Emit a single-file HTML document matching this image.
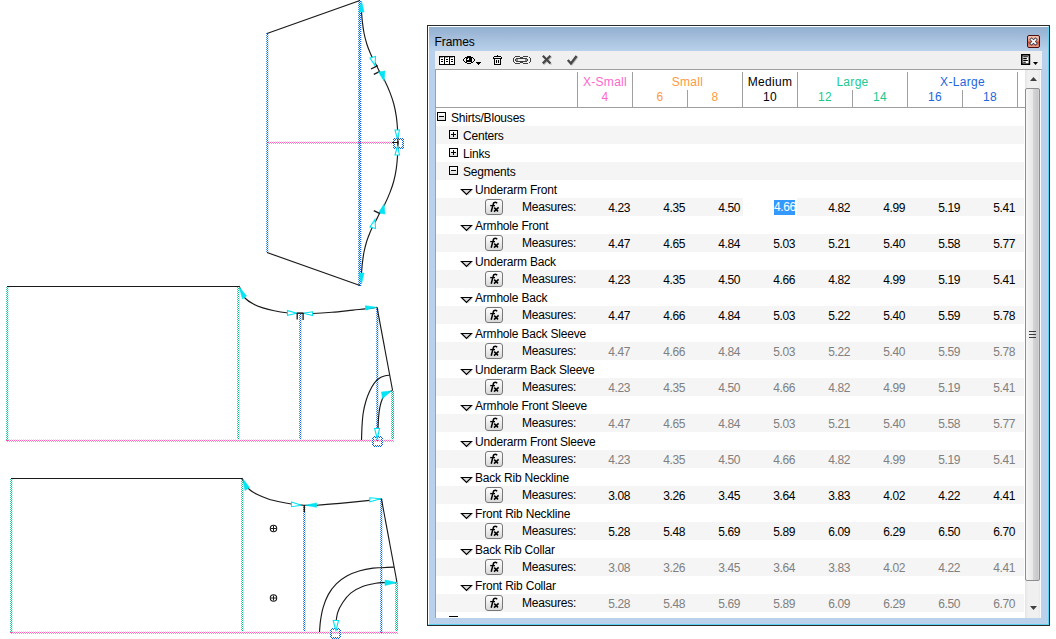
<!DOCTYPE html>
<html><head><meta charset="utf-8">
<style>
html,body{margin:0;padding:0;background:#fff;width:1056px;height:639px;overflow:hidden;position:relative;font-family:"Liberation Sans",sans-serif;font-size:12px;color:#000}
.abs{position:absolute}
#draw{position:absolute;left:0;top:0}
#panel{position:absolute;left:427px;top:25px;width:621px;height:599px;border:1px solid #2a2a2a;background:#b9d1ea}
#panel:before{content:"";position:absolute;left:0;top:0;right:0;bottom:0;border-left:1px solid #fff;border-top:1px solid #fff;border-right:1px solid #5ed0f0;border-bottom:1px solid #5ed0f0}
#title{position:absolute;left:429px;top:27px;width:619px;height:24px;background:linear-gradient(#93afd0,#b9d1ea)}
#ttext{position:absolute;left:434.6px;top:35px;font-size:12px;color:#000;letter-spacing:-0.1px}
#close{position:absolute;left:1027px;top:35px;width:11px;height:11px;border:1px solid #4a1010;border-radius:2px;background:linear-gradient(#f4c8b8,#e89078 45%,#c84a30 55%,#e8a090)}
#toolbar{position:absolute;left:435px;top:51px;width:607px;height:18px;background:#f0f0f0;border-bottom:1px solid #a0a0a0}
#content{position:absolute;left:435px;top:70px;width:590px;height:548px;background:#fff;border-left:1px solid #a0a0a0;overflow:hidden}
#sb{position:absolute;left:1025px;top:70px;width:15px;height:548px;background:linear-gradient(90deg,#e4e4e4,#f0f0f0 3px,#f0f0f0 13px,#e8e8e8);border-right:1px solid #fbfbfb}
#thumb{position:absolute;left:1025px;top:88px;width:13px;height:491px;border:1px solid #8e8e8e;border-radius:2px;background:linear-gradient(90deg,#f6f6f6,#e8e8e8 50%,#d6d6d8 52%,#c8c8cc 90%,#d8d8d8)}
.hl{position:absolute;background:#a0a0a0}
.hdr{position:absolute;text-align:center;width:110px;font-size:12px;letter-spacing:0.3px}
.bg{position:absolute;left:436px;width:588px;height:18px;background:#f5f5f5}
.t{position:absolute;height:18px;line-height:18px;white-space:nowrap;letter-spacing:-0.2px;color:#000}
.v{position:absolute;width:52px;text-align:right;height:18px;line-height:18px;letter-spacing:-0.4px;color:#000}
.v.g{color:#808080}
.sel{position:absolute;width:21px;height:15px;line-height:15px;background:#3399ff;color:#fff;letter-spacing:-0.4px;text-align:center}
.exp{position:absolute;width:7px;height:7px;border:1px solid #000;background:linear-gradient(#fff,#ddd)}
.exp i{position:absolute;background:#000}
.exp i.h{left:1px;top:3px;width:5px;height:1px}
.exp i.v{left:3px;top:1px;width:1px;height:5px}
.tri{position:absolute}
.fx{position:absolute;width:16px;height:14px;border:1px solid #777;border-radius:3px;background:linear-gradient(#fdfdfd,#f0f0f0 40%,#d8d8d8);font-family:"Liberation Serif",serif;font-style:italic;font-size:12px;line-height:14px}
.fx span{position:absolute;left:3px;top:0px;font-size:13px}
.fx b{position:absolute;left:8px;top:1px;font-weight:normal;font-size:11px}
</style></head><body>
<svg id="draw" width="427" height="639" viewBox="0 0 427 639">
<defs><pattern id="bvA" width="1" height="2" patternUnits="userSpaceOnUse"><rect width="1" height="1" fill="#0a64dc"/></pattern><pattern id="bvB" width="1" height="2" patternUnits="userSpaceOnUse"><rect y="1" width="1" height="1" fill="#4a8ee6"/></pattern><pattern id="bvS" width="1" height="2" patternUnits="userSpaceOnUse"><rect y="1" width="1" height="1" fill="#0a64dc"/></pattern><pattern id="bhA" width="2" height="1" patternUnits="userSpaceOnUse"><rect width="1" height="1" fill="#0a64dc"/></pattern><pattern id="bhB" width="2" height="1" patternUnits="userSpaceOnUse"><rect x="1" width="1" height="1" fill="#4a8ee6"/></pattern><pattern id="bhF" width="2" height="1" patternUnits="userSpaceOnUse"><rect x="1" width="1" height="1" fill="#b4d2f4"/></pattern><pattern id="bvF" width="1" height="2" patternUnits="userSpaceOnUse"><rect y="1" width="1" height="1" fill="#b4d2f4"/></pattern><pattern id="gvA" width="1" height="2" patternUnits="userSpaceOnUse"><rect width="1" height="1" fill="#00c48c"/></pattern><pattern id="gvB" width="1" height="2" patternUnits="userSpaceOnUse"><rect y="1" width="1" height="1" fill="#3ccfa4"/></pattern><pattern id="gvS" width="1" height="2" patternUnits="userSpaceOnUse"><rect y="1" width="1" height="1" fill="#00c48c"/></pattern><pattern id="ghA" width="2" height="1" patternUnits="userSpaceOnUse"><rect width="1" height="1" fill="#00c48c"/></pattern><pattern id="ghB" width="2" height="1" patternUnits="userSpaceOnUse"><rect x="1" width="1" height="1" fill="#3ccfa4"/></pattern><pattern id="ghF" width="2" height="1" patternUnits="userSpaceOnUse"><rect x="1" width="1" height="1" fill="#b0ecd8"/></pattern><pattern id="gvF" width="1" height="2" patternUnits="userSpaceOnUse"><rect y="1" width="1" height="1" fill="#b0ecd8"/></pattern><pattern id="pvA" width="1" height="2" patternUnits="userSpaceOnUse"><rect width="1" height="1" fill="#ff5cbc"/></pattern><pattern id="pvB" width="1" height="2" patternUnits="userSpaceOnUse"><rect y="1" width="1" height="1" fill="#ff90cc"/></pattern><pattern id="pvS" width="1" height="2" patternUnits="userSpaceOnUse"><rect y="1" width="1" height="1" fill="#ff5cbc"/></pattern><pattern id="phA" width="2" height="1" patternUnits="userSpaceOnUse"><rect width="1" height="1" fill="#ff5cbc"/></pattern><pattern id="phB" width="2" height="1" patternUnits="userSpaceOnUse"><rect x="1" width="1" height="1" fill="#ff90cc"/></pattern><pattern id="phF" width="2" height="1" patternUnits="userSpaceOnUse"><rect x="1" width="1" height="1" fill="#ffd4ec"/></pattern><pattern id="pvF" width="1" height="2" patternUnits="userSpaceOnUse"><rect y="1" width="1" height="1" fill="#ffd4ec"/></pattern></defs>
<g shape-rendering="crispEdges">
<rect x="267" y="33" width="1" height="220" fill="url(#bvA)"/>
<rect x="266" y="33" width="1" height="220" fill="url(#bvB)"/>
<rect x="268" y="33" width="1" height="220" fill="url(#bvF)"/>
<rect x="359" y="0" width="1" height="286" fill="url(#bvA)"/>
<rect x="360" y="0" width="1" height="286" fill="url(#bvS)"/>
<rect x="358" y="0" width="1" height="286" fill="url(#bvB)"/>
<rect x="361" y="0" width="1" height="286" fill="url(#bvF)"/>
<rect x="268" y="142" width="125" height="1" fill="url(#phA)"/>
<rect x="268" y="141" width="125" height="1" fill="url(#phF)"/>
<rect x="268" y="143" width="125" height="1" fill="url(#phB)"/>
<rect x="7" y="286" width="1" height="155" fill="url(#gvA)"/>
<rect x="6" y="286" width="1" height="155" fill="url(#gvB)"/>
<rect x="8" y="286" width="1" height="155" fill="url(#gvF)"/>
<rect x="238" y="287" width="1" height="154" fill="url(#gvA)"/>
<rect x="237" y="287" width="1" height="154" fill="url(#gvB)"/>
<rect x="239" y="287" width="1" height="154" fill="url(#gvF)"/>
<rect x="300" y="314" width="1" height="127" fill="url(#bvA)"/>
<rect x="299" y="314" width="1" height="127" fill="url(#bvB)"/>
<rect x="301" y="314" width="1" height="127" fill="url(#bvF)"/>
<rect x="377" y="308" width="1" height="133" fill="url(#bvA)"/>
<rect x="376" y="308" width="1" height="133" fill="url(#bvB)"/>
<rect x="378" y="308" width="1" height="133" fill="url(#bvF)"/>
<rect x="392" y="391" width="1" height="50" fill="url(#gvA)"/>
<rect x="393" y="391" width="1" height="50" fill="url(#gvS)"/>
<rect x="391" y="391" width="1" height="50" fill="url(#gvB)"/>
<rect x="6" y="440" width="388" height="1" fill="url(#phA)"/>
<rect x="6" y="439" width="388" height="1" fill="url(#phF)"/>
<rect x="6" y="441" width="388" height="1" fill="url(#phB)"/>
<rect x="11" y="478" width="1" height="155" fill="url(#gvA)"/>
<rect x="10" y="478" width="1" height="155" fill="url(#gvB)"/>
<rect x="12" y="478" width="1" height="155" fill="url(#gvF)"/>
<rect x="242" y="479" width="1" height="154" fill="url(#gvA)"/>
<rect x="241" y="479" width="1" height="154" fill="url(#gvB)"/>
<rect x="243" y="479" width="1" height="154" fill="url(#gvF)"/>
<rect x="304" y="506" width="1" height="127" fill="url(#bvA)"/>
<rect x="303" y="506" width="1" height="127" fill="url(#bvB)"/>
<rect x="305" y="506" width="1" height="127" fill="url(#bvF)"/>
<rect x="381" y="499" width="1" height="134" fill="url(#bvA)"/>
<rect x="380" y="499" width="1" height="134" fill="url(#bvB)"/>
<rect x="382" y="499" width="1" height="134" fill="url(#bvF)"/>
<rect x="396" y="583" width="1" height="50" fill="url(#gvA)"/>
<rect x="397" y="583" width="1" height="50" fill="url(#gvS)"/>
<rect x="395" y="583" width="1" height="50" fill="url(#gvB)"/>
<rect x="10" y="632" width="388" height="1" fill="url(#phA)"/>
<rect x="10" y="631" width="388" height="1" fill="url(#phF)"/>
<rect x="10" y="633" width="388" height="1" fill="url(#phB)"/>
<rect x="394" y="138" width="1" height="1" fill="#0a64dc"/>
<rect x="396" y="138" width="1" height="1" fill="#0a64dc"/>
<rect x="398" y="138" width="1" height="1" fill="#0a64dc"/>
<rect x="400" y="138" width="1" height="1" fill="#0a64dc"/>
<rect x="402" y="138" width="1" height="1" fill="#0a64dc"/>
<rect x="393" y="139" width="1" height="1" fill="#0a64dc"/>
<rect x="395" y="139" width="1" height="1" fill="#0a64dc"/>
<rect x="397" y="139" width="1" height="1" fill="#0a64dc"/>
<rect x="399" y="139" width="1" height="1" fill="#0a64dc"/>
<rect x="401" y="139" width="1" height="1" fill="#0a64dc"/>
<rect x="403" y="139" width="1" height="1" fill="#0a64dc"/>
<rect x="394" y="140" width="1" height="1" fill="#0a64dc"/>
<rect x="402" y="140" width="1" height="1" fill="#0a64dc"/>
<rect x="393" y="141" width="1" height="1" fill="#0a64dc"/>
<rect x="403" y="141" width="1" height="1" fill="#0a64dc"/>
<rect x="394" y="142" width="1" height="1" fill="#0a64dc"/>
<rect x="402" y="142" width="1" height="1" fill="#0a64dc"/>
<rect x="393" y="143" width="1" height="1" fill="#0a64dc"/>
<rect x="403" y="143" width="1" height="1" fill="#0a64dc"/>
<rect x="394" y="144" width="1" height="1" fill="#0a64dc"/>
<rect x="402" y="144" width="1" height="1" fill="#0a64dc"/>
<rect x="393" y="145" width="1" height="1" fill="#0a64dc"/>
<rect x="403" y="145" width="1" height="1" fill="#0a64dc"/>
<rect x="394" y="146" width="1" height="1" fill="#0a64dc"/>
<rect x="402" y="146" width="1" height="1" fill="#0a64dc"/>
<rect x="393" y="147" width="1" height="1" fill="#0a64dc"/>
<rect x="395" y="147" width="1" height="1" fill="#0a64dc"/>
<rect x="397" y="147" width="1" height="1" fill="#0a64dc"/>
<rect x="399" y="147" width="1" height="1" fill="#0a64dc"/>
<rect x="401" y="147" width="1" height="1" fill="#0a64dc"/>
<rect x="403" y="147" width="1" height="1" fill="#0a64dc"/>
<rect x="394" y="148" width="1" height="1" fill="#0a64dc"/>
<rect x="396" y="148" width="1" height="1" fill="#0a64dc"/>
<rect x="398" y="148" width="1" height="1" fill="#0a64dc"/>
<rect x="400" y="148" width="1" height="1" fill="#0a64dc"/>
<rect x="402" y="148" width="1" height="1" fill="#0a64dc"/>
<rect x="374" y="436" width="1" height="1" fill="#0a64dc"/>
<rect x="376" y="436" width="1" height="1" fill="#0a64dc"/>
<rect x="378" y="436" width="1" height="1" fill="#0a64dc"/>
<rect x="380" y="436" width="1" height="1" fill="#0a64dc"/>
<rect x="373" y="437" width="1" height="1" fill="#0a64dc"/>
<rect x="375" y="437" width="1" height="1" fill="#0a64dc"/>
<rect x="377" y="437" width="1" height="1" fill="#0a64dc"/>
<rect x="379" y="437" width="1" height="1" fill="#0a64dc"/>
<rect x="381" y="437" width="1" height="1" fill="#0a64dc"/>
<rect x="372" y="438" width="1" height="1" fill="#0a64dc"/>
<rect x="382" y="438" width="1" height="1" fill="#0a64dc"/>
<rect x="373" y="439" width="1" height="1" fill="#0a64dc"/>
<rect x="381" y="439" width="1" height="1" fill="#0a64dc"/>
<rect x="372" y="440" width="1" height="1" fill="#0a64dc"/>
<rect x="382" y="440" width="1" height="1" fill="#0a64dc"/>
<rect x="373" y="441" width="1" height="1" fill="#0a64dc"/>
<rect x="381" y="441" width="1" height="1" fill="#0a64dc"/>
<rect x="372" y="442" width="1" height="1" fill="#0a64dc"/>
<rect x="382" y="442" width="1" height="1" fill="#0a64dc"/>
<rect x="373" y="443" width="1" height="1" fill="#0a64dc"/>
<rect x="381" y="443" width="1" height="1" fill="#0a64dc"/>
<rect x="372" y="444" width="1" height="1" fill="#0a64dc"/>
<rect x="382" y="444" width="1" height="1" fill="#0a64dc"/>
<rect x="373" y="445" width="1" height="1" fill="#0a64dc"/>
<rect x="375" y="445" width="1" height="1" fill="#0a64dc"/>
<rect x="377" y="445" width="1" height="1" fill="#0a64dc"/>
<rect x="379" y="445" width="1" height="1" fill="#0a64dc"/>
<rect x="381" y="445" width="1" height="1" fill="#0a64dc"/>
<rect x="374" y="446" width="1" height="1" fill="#0a64dc"/>
<rect x="376" y="446" width="1" height="1" fill="#0a64dc"/>
<rect x="378" y="446" width="1" height="1" fill="#0a64dc"/>
<rect x="380" y="446" width="1" height="1" fill="#0a64dc"/>
<rect x="332" y="628" width="1" height="1" fill="#0a64dc"/>
<rect x="334" y="628" width="1" height="1" fill="#0a64dc"/>
<rect x="336" y="628" width="1" height="1" fill="#0a64dc"/>
<rect x="338" y="628" width="1" height="1" fill="#0a64dc"/>
<rect x="331" y="629" width="1" height="1" fill="#0a64dc"/>
<rect x="333" y="629" width="1" height="1" fill="#0a64dc"/>
<rect x="335" y="629" width="1" height="1" fill="#0a64dc"/>
<rect x="337" y="629" width="1" height="1" fill="#0a64dc"/>
<rect x="339" y="629" width="1" height="1" fill="#0a64dc"/>
<rect x="330" y="630" width="1" height="1" fill="#0a64dc"/>
<rect x="340" y="630" width="1" height="1" fill="#0a64dc"/>
<rect x="331" y="631" width="1" height="1" fill="#0a64dc"/>
<rect x="339" y="631" width="1" height="1" fill="#0a64dc"/>
<rect x="330" y="632" width="1" height="1" fill="#0a64dc"/>
<rect x="340" y="632" width="1" height="1" fill="#0a64dc"/>
<rect x="331" y="633" width="1" height="1" fill="#0a64dc"/>
<rect x="339" y="633" width="1" height="1" fill="#0a64dc"/>
<rect x="330" y="634" width="1" height="1" fill="#0a64dc"/>
<rect x="340" y="634" width="1" height="1" fill="#0a64dc"/>
<rect x="331" y="635" width="1" height="1" fill="#0a64dc"/>
<rect x="339" y="635" width="1" height="1" fill="#0a64dc"/>
<rect x="330" y="636" width="1" height="1" fill="#0a64dc"/>
<rect x="340" y="636" width="1" height="1" fill="#0a64dc"/>
<rect x="331" y="637" width="1" height="1" fill="#0a64dc"/>
<rect x="333" y="637" width="1" height="1" fill="#0a64dc"/>
<rect x="335" y="637" width="1" height="1" fill="#0a64dc"/>
<rect x="337" y="637" width="1" height="1" fill="#0a64dc"/>
<rect x="339" y="637" width="1" height="1" fill="#0a64dc"/>
<rect x="332" y="638" width="1" height="1" fill="#0a64dc"/>
<rect x="334" y="638" width="1" height="1" fill="#0a64dc"/>
<rect x="336" y="638" width="1" height="1" fill="#0a64dc"/>
<rect x="338" y="638" width="1" height="1" fill="#0a64dc"/>
</g>
<path d="M267 33.5 L360 0.5" fill="none" stroke="#1a1a1a" stroke-width="1.15"/>
<path d="M267 252.5 L360 285.5" fill="none" stroke="#1a1a1a" stroke-width="1.15"/>
<path d="M361.50 12.00 C361.65 13.67 361.98 18.50 362.40 22.00 C362.82 25.50 363.27 29.33 364.00 33.00 C364.73 36.67 365.80 40.75 366.80 44.00 C367.80 47.25 368.97 50.00 370.00 52.50 C371.03 55.00 371.95 56.92 373.00 59.00 C374.05 61.08 375.13 62.75 376.30 65.00 C377.47 67.25 378.55 69.78 380.00 72.50 C381.45 75.22 383.33 77.95 385.00 81.30 C386.67 84.65 388.53 88.82 390.00 92.60 C391.47 96.38 392.75 100.03 393.80 104.00 C394.85 107.97 395.67 112.07 396.30 116.40 C396.93 120.73 397.33 125.65 397.60 130.00 C397.87 134.35 397.85 140.42 397.90 142.50 L397.90 142.50 C397.85 144.58 397.87 150.65 397.60 155.00 C397.33 159.35 396.93 164.27 396.30 168.60 C395.67 172.93 394.85 177.03 393.80 181.00 C392.75 184.97 391.47 188.62 390.00 192.40 C388.53 196.18 386.67 200.35 385.00 203.70 C383.33 207.05 381.45 209.78 380.00 212.50 C378.55 215.22 377.47 217.75 376.30 220.00 C375.13 222.25 374.05 223.92 373.00 226.00 C371.95 228.08 371.03 230.00 370.00 232.50 C368.97 235.00 367.80 237.75 366.80 241.00 C365.80 244.25 364.73 248.33 364.00 252.00 C363.27 255.67 362.82 259.50 362.40 263.00 C361.98 266.50 361.65 271.33 361.50 273.00" fill="none" stroke="#1a1a1a" stroke-width="1.15"/>
<polygon points="359,12 364,12 361.5,1" fill="#00e4f4" stroke="#00e4f4" stroke-width="0.6"/>
<polygon points="359,273 364,273 361.5,284" fill="#00e4f4" stroke="#00e4f4" stroke-width="0.6"/>
<polygon points="370,58 375.5,56.5 375,65.5" fill="#fff" stroke="#00e4f4" stroke-width="1.1"/>
<path d="M371 69 L377.7 65.6 M373.8 74.4 L380 71.3" fill="none" stroke="#1a1a1a" stroke-width="1.3"/>
<polygon points="378.5,72 385,71 384,81" fill="#00e4f4" stroke="#00e4f4" stroke-width="0.6"/>
<polygon points="395,130 399.5,130 397.5,139" fill="#fff" stroke="#00e4f4" stroke-width="1.1"/>
<polygon points="395,155 399.5,155 397.5,146" fill="#fff" stroke="#00e4f4" stroke-width="1.1"/>
<path d="M392 142.5 H398 M398 141 V144.5" fill="none" stroke="#1a1a1a" stroke-width="1.2"/>
<polygon points="378.5,213 385,214 384,204" fill="#00e4f4" stroke="#00e4f4" stroke-width="0.6"/>
<path d="M373.8 210.6 L380 213.7" fill="none" stroke="#1a1a1a" stroke-width="1.3"/>
<polygon points="370,227 375.5,228.5 375,219.5" fill="#fff" stroke="#00e4f4" stroke-width="1.1"/>
<path d="M7 286.5 L239 286.5" fill="none" stroke="#1a1a1a" stroke-width="1.15"/>
<path d="M239.00 286.00 C239.42 286.92 240.52 289.50 241.50 291.50 C242.48 293.50 242.92 295.90 244.90 298.00 C246.88 300.10 250.40 302.45 253.40 304.10 C256.40 305.75 259.43 306.78 262.90 307.90 C266.37 309.02 270.25 310.00 274.20 310.80 C278.15 311.60 282.22 312.28 286.60 312.70 C290.98 313.12 298.18 313.20 300.50 313.30" fill="none" stroke="#1a1a1a" stroke-width="1.15"/>
<path d="M300.50 313.30 C302.55 313.33 307.55 313.67 312.80 313.50 C318.05 313.33 325.30 312.87 332.00 312.30 C338.70 311.73 347.43 310.67 353.00 310.10 C358.57 309.53 361.40 309.38 365.40 308.90 C369.40 308.42 375.07 307.48 377.00 307.20" fill="none" stroke="#1a1a1a" stroke-width="1.15"/>
<path d="M377 307.2 L392.6 390.5" fill="none" stroke="#1a1a1a" stroke-width="1.15"/>
<path d="M361.50 440.00 C361.60 437.45 361.80 429.28 362.10 424.70 C362.40 420.12 362.68 416.37 363.30 412.50 C363.92 408.63 364.78 404.97 365.80 401.50 C366.82 398.03 367.98 394.77 369.40 391.70 C370.82 388.63 372.47 385.45 374.30 383.10 C376.13 380.75 378.57 378.82 380.40 377.60 C382.23 376.38 383.77 376.20 385.30 375.80 C386.83 375.40 388.88 375.30 389.60 375.20" fill="none" stroke="#1a1a1a" stroke-width="1.15"/>
<path d="M392.50 390.50 C391.42 391.00 387.70 392.08 386.00 393.50 C384.30 394.92 383.33 396.65 382.30 399.00 C381.27 401.35 380.42 404.55 379.80 407.60 C379.18 410.65 378.90 413.90 378.60 417.30 C378.30 420.70 378.10 426.22 378.00 428.00" fill="none" stroke="#1a1a1a" stroke-width="1.15"/>
<polygon points="239.2,287 246.5,296 242.5,299" fill="#00e4f4" stroke="#00e4f4" stroke-width="0.6"/>
<polygon points="287.5,310.6 297,313.3 287.5,315.4" fill="#fff" stroke="#00e4f4" stroke-width="1.1"/>
<polygon points="312.6,311.8 303.5,313.3 312.6,315.6" fill="#fff" stroke="#00e4f4" stroke-width="1.1"/>
<path d="M297.2 313 V319.5 M303.1 313 V320 M297 313.2 H303.3" fill="none" stroke="#1a1a1a" stroke-width="1.3"/>
<polygon points="365.5,305.7 376.5,307.3 365.5,310" fill="#00e4f4" stroke="#00e4f4" stroke-width="0.6"/>
<polygon points="391.5,391 381.5,392 382.5,398.4" fill="#00e4f4" stroke="#00e4f4" stroke-width="0.6"/>
<polygon points="374.6,428.5 379.6,428.5 377.2,438.5" fill="#fff" stroke="#00e4f4" stroke-width="1.1"/>
<path d="M11 478.5 L242 478.5" fill="none" stroke="#1a1a1a" stroke-width="1.15"/>
<path d="M242.00 478.00 C242.50 479.00 243.72 482.05 245.00 484.00 C246.28 485.95 247.63 487.93 249.70 489.70 C251.77 491.47 254.30 493.05 257.40 494.60 C260.50 496.15 264.65 497.80 268.30 499.00 C271.95 500.20 275.47 500.97 279.30 501.80 C283.13 502.63 287.10 503.42 291.30 504.00 C295.50 504.58 302.30 505.08 304.50 505.30" fill="none" stroke="#1a1a1a" stroke-width="1.15"/>
<path d="M304.50 505.30 C306.52 505.28 310.68 505.52 316.60 505.20 C322.52 504.88 331.17 504.20 340.00 503.40 C348.83 502.60 362.70 501.18 369.60 500.40 C376.50 499.62 379.43 498.98 381.40 498.70" fill="none" stroke="#1a1a1a" stroke-width="1.15"/>
<path d="M381.4 498.7 L397 582.5" fill="none" stroke="#1a1a1a" stroke-width="1.15"/>
<path d="M319.50 632.00 C319.67 630.12 319.90 624.77 320.50 620.70 C321.10 616.63 321.78 611.98 323.10 607.60 C324.42 603.22 326.20 598.35 328.40 594.40 C330.60 590.45 333.23 586.97 336.30 583.90 C339.37 580.83 342.87 578.18 346.80 576.00 C350.73 573.82 355.53 572.12 359.90 570.80 C364.27 569.48 369.38 568.62 373.00 568.10 C376.62 567.58 378.10 567.87 381.60 567.70 C385.10 567.53 391.93 567.20 394.00 567.10" fill="none" stroke="#1a1a1a" stroke-width="1.15"/>
<path d="M335.60 626.00 C335.93 623.80 336.38 616.75 337.60 612.80 C338.82 608.85 340.72 605.58 342.90 602.30 C345.08 599.02 347.42 595.73 350.70 593.10 C353.98 590.47 358.43 588.13 362.60 586.50 C366.77 584.87 372.20 583.95 375.70 583.30 C379.20 582.65 380.10 582.72 383.60 582.60 C387.10 582.48 394.52 582.60 396.70 582.60" fill="none" stroke="#1a1a1a" stroke-width="1.15"/>
<polygon points="243,479 249.5,487.5 245,490.5" fill="#00e4f4" stroke="#00e4f4" stroke-width="0.6"/>
<polygon points="291.5,502 301.5,505.2 291.5,506.7" fill="#fff" stroke="#00e4f4" stroke-width="1.1"/>
<polygon points="316.5,502.9 305.6,505.3 316.5,507.3" fill="#00e4f4" stroke="#00e4f4" stroke-width="0.6"/>
<path d="M304.3 505 V512" fill="none" stroke="#1a1a1a" stroke-width="1.4"/>
<polygon points="369.8,497.8 381,498.7 369.8,501.8" fill="#fff" stroke="#00e4f4" stroke-width="1.1"/>
<polygon points="385,580 396.7,582.6 385,585.5" fill="#00e4f4" stroke="#00e4f4" stroke-width="0.6"/>
<polygon points="333.2,620.5 338.5,620.5 336,631" fill="#fff" stroke="#00e4f4" stroke-width="1.1"/>
<circle cx="273.5" cy="528.5" r="3.2" fill="none" stroke="#1a1a1a" stroke-width="1.1"/>
<path d="M271 528.5 H276 M273.5 526.0 V531.0" fill="none" stroke="#1a1a1a" stroke-width="1.0"/>
<circle cx="273.5" cy="598" r="3.2" fill="none" stroke="#1a1a1a" stroke-width="1.1"/>
<path d="M271 598 H276 M273.5 595.5 V600.5" fill="none" stroke="#1a1a1a" stroke-width="1.0"/>
</svg>
<div id="panel"></div>
<div id="title"></div>
<div id="ttext">Frames</div>
<div id="close"></div>
<svg class="abs" style="left:1027px;top:35px" width="13" height="13" viewBox="0 0 13 13"><path d="M4.6 4.6 L8.4 8.4 M8.4 4.6 L4.6 8.4" stroke="#3a4050" stroke-width="3.2" stroke-linecap="square"/><path d="M4.6 4.6 L8.4 8.4 M8.4 4.6 L4.6 8.4" stroke="#fff" stroke-width="1.7" stroke-linecap="square"/></svg>
<div id="toolbar"></div>
<svg class="abs" style="left:435px;top:51px" width="607" height="18" viewBox="435 51 607 18">
<g shape-rendering="crispEdges">
<rect x="439.5" y="56.5" width="15" height="8" fill="#fff" stroke="#000" stroke-width="1.2"/>
<rect x="444" y="56" width="1" height="9" fill="#000"/><rect x="449" y="56" width="1" height="9" fill="#000"/>
<rect x="441" y="59" width="2" height="1" fill="#000"/><rect x="441" y="61" width="2" height="1" fill="#000"/><rect x="440" y="57" width="3" height="1" fill="#999"/>
<rect x="446" y="59" width="2" height="1" fill="#000"/><rect x="446" y="61" width="2" height="1" fill="#000"/><rect x="445" y="57" width="3" height="1" fill="#999"/>
<rect x="451" y="59" width="2" height="1" fill="#000"/><rect x="451" y="61" width="2" height="1" fill="#000"/><rect x="450" y="57" width="3" height="1" fill="#999"/>
</g>
<g shape-rendering="crispEdges"><rect x="467" y="56" width="4" height="1" fill="#000"/><rect x="465" y="57" width="8" height="1" fill="#000"/><rect x="464" y="58" width="1" height="1" fill="#000"/><rect x="466" y="58" width="6" height="1" fill="#000"/><rect x="473" y="58" width="1" height="1" fill="#000"/><rect x="463" y="59" width="1" height="2" fill="#000"/><rect x="466" y="59" width="6" height="2" fill="#000"/><rect x="474" y="59" width="1" height="2" fill="#000"/><rect x="468" y="58" width="1" height="1" fill="#fff"/><rect x="467" y="59" width="2" height="1" fill="#fff"/><rect x="464" y="61" width="1" height="1" fill="#000"/><rect x="466" y="61" width="6" height="1" fill="#000"/><rect x="473" y="61" width="1" height="1" fill="#000"/><rect x="465" y="62" width="2" height="1" fill="#000"/><rect x="471" y="62" width="2" height="1" fill="#000"/><rect x="467" y="63" width="4" height="1" fill="#000"/><rect x="476" y="62" width="5" height="1" fill="#000"/><rect x="477" y="63" width="3" height="1" fill="#000"/><rect x="478" y="64" width="1" height="1" fill="#000"/></g>
<g shape-rendering="crispEdges"><rect x="497" y="55" width="1" height="1" fill="#000"/><rect x="494" y="56" width="7" height="1" fill="#000"/><rect x="493" y="57" width="1" height="2" fill="#000"/><rect x="501" y="57" width="1" height="2" fill="#000"/><rect x="494" y="58" width="7" height="1" fill="#000"/><rect x="494" y="59" width="1" height="6" fill="#000"/><rect x="500" y="59" width="1" height="6" fill="#000"/><rect x="495" y="64" width="5" height="1" fill="#000"/><rect x="496" y="60" width="1" height="3" fill="#000"/><rect x="498" y="60" width="1" height="3" fill="#000"/></g>
<g shape-rendering="crispEdges"><rect x="515" y="56" width="5" height="1" fill="#3e3e3e"/><rect x="523" y="56" width="5" height="1" fill="#3e3e3e"/><rect x="514" y="57" width="1" height="1" fill="#3e3e3e"/><rect x="529" y="57" width="1" height="1" fill="#3e3e3e"/><rect x="520" y="57" width="3" height="1" fill="#3e3e3e"/><rect x="513" y="58" width="1" height="4" fill="#3e3e3e"/><rect x="530" y="58" width="1" height="4" fill="#3e3e3e"/><rect x="516" y="58" width="11" height="1" fill="#3e3e3e"/><rect x="516" y="61" width="11" height="1" fill="#3e3e3e"/><rect x="515" y="59" width="1" height="2" fill="#3e3e3e"/><rect x="527" y="59" width="1" height="2" fill="#3e3e3e"/><rect x="516" y="59" width="2" height="2" fill="#8a8a8a"/><rect x="525" y="59" width="2" height="2" fill="#8a8a8a"/><rect x="514" y="62" width="1" height="1" fill="#3e3e3e"/><rect x="529" y="62" width="1" height="1" fill="#3e3e3e"/><rect x="520" y="62" width="3" height="1" fill="#3e3e3e"/><rect x="515" y="63" width="5" height="1" fill="#3e3e3e"/><rect x="523" y="63" width="5" height="1" fill="#3e3e3e"/></g>
<path d="M543.8 56.8 L551.5 64.5 M551.5 56.8 L543.8 64.5" stroke="#b8b8b8" stroke-width="1.6"/><path d="M542.8 55.8 L550.4 63.4 M550.4 55.8 L542.8 63.4" stroke="#484848" stroke-width="2.2"/>
<path d="M568.8 61 L571.9 64.5 L577.6 57" fill="none" stroke="#b8b8b8" stroke-width="1.6"/><path d="M567.8 60 L570.9 63.5 L576.6 56" fill="none" stroke="#484848" stroke-width="2.3"/>
<rect x="1021.8" y="54.8" width="7.6" height="9.4" fill="#fff" stroke="#000" stroke-width="1.6"/>
<path d="M1023.2 56.8 H1027.8 M1023.2 58.6 H1026.8 M1023.2 60.5 H1027.8 M1023.2 62.3 H1025.8" stroke="#000" stroke-width="1.1"/>
<polygon points="1033,62 1038,62 1035.5,65" fill="#000"/>
</svg>
<div id="content"></div>
<div id="sb"></div>
<div id="thumb"></div>
<svg class="abs" style="left:1025px;top:70px" width="16" height="547" viewBox="1025 70 16 547">
<polygon points="1030,81 1037,81 1033.5,77" fill="#404040"/>
<polygon points="1030,606 1037,606 1033.5,610" fill="#404040"/>
<path d="M1029 331.5 H1036 M1029 334.5 H1036 M1029 337.5 H1036" stroke="#3a3a3a" stroke-width="1.2"/>
</svg>
<div class="hl" style="left:577px;top:72px;width:1px;height:35px"></div>
<div class="hl" style="left:632px;top:72px;width:1px;height:35px"></div>
<div class="hl" style="left:742px;top:72px;width:1px;height:35px"></div>
<div class="hl" style="left:797px;top:72px;width:1px;height:35px"></div>
<div class="hl" style="left:907px;top:72px;width:1px;height:35px"></div>
<div class="hl" style="left:1017px;top:72px;width:1px;height:35px"></div>
<div class="hl" style="left:687px;top:90px;width:1px;height:17px"></div>
<div class="hl" style="left:852px;top:90px;width:1px;height:17px"></div>
<div class="hl" style="left:962px;top:90px;width:1px;height:17px"></div>
<div class="hl" style="left:435px;top:107px;width:590px;height:1px"></div>
<div class="hdr" style="left:578px;top:75px;width:54px;color:#ff66cc">X-Small</div>
<div class="hdr" style="left:578px;top:90px;width:54px;color:#ff66cc">4</div>
<div class="hdr" style="left:633px;top:75px;width:109px;color:#ff9940">Small</div>
<div class="hdr" style="left:633px;top:90px;width:54px;color:#ff9940">6</div>
<div class="hdr" style="left:688px;top:90px;width:54px;color:#ff9940">8</div>
<div class="hdr" style="left:743px;top:75px;width:54px;color:#000">Medium</div>
<div class="hdr" style="left:743px;top:90px;width:54px;color:#000">10</div>
<div class="hdr" style="left:798px;top:75px;width:109px;color:#20c890">Large</div>
<div class="hdr" style="left:798px;top:90px;width:54px;color:#20c890">12</div>
<div class="hdr" style="left:853px;top:90px;width:54px;color:#20c890">14</div>
<div class="hdr" style="left:908px;top:75px;width:109px;color:#2266dd">X-Large</div>
<div class="hdr" style="left:908px;top:90px;width:54px;color:#2266dd">16</div>
<div class="hdr" style="left:963px;top:90px;width:54px;color:#2266dd">18</div>
<div class="bg" style="top:126px"></div>
<div class="bg" style="top:162px"></div>
<div class="bg" style="top:198px;left:436px;width:307px"></div>
<div class="bg" style="top:198px;left:797px;width:227px"></div>
<div class="bg" style="top:234px"></div>
<div class="bg" style="top:270px"></div>
<div class="bg" style="top:306px"></div>
<div class="bg" style="top:342px"></div>
<div class="bg" style="top:378px"></div>
<div class="bg" style="top:414px"></div>
<div class="bg" style="top:450px"></div>
<div class="bg" style="top:486px"></div>
<div class="bg" style="top:522px"></div>
<div class="bg" style="top:558px"></div>
<div class="bg" style="top:594px"></div>
<div class="exp" style="left:437px;top:112px"><i class="h"></i></div><div class="t" style="left:451px;top:109px">Shirts/Blouses</div>
<div class="exp" style="left:449px;top:130px"><i class="h"></i><i class="v"></i></div><div class="t" style="left:463px;top:127px">Centers</div>
<div class="exp" style="left:449px;top:148px"><i class="h"></i><i class="v"></i></div><div class="t" style="left:463px;top:145px">Links</div>
<div class="exp" style="left:449px;top:166px"><i class="h"></i></div><div class="t" style="left:463px;top:163px">Segments</div>
<svg class="tri" style="left:460px;top:188px" width="14" height="9"><path d="M1.5 1.5 H11.5 L6.5 6.5 Z" fill="#d8d8d8" stroke="#000" stroke-width="1.2" stroke-linejoin="miter"/><path d="M11.8 2.5 L7.5 7" stroke="#aaa" stroke-width="1" fill="none"/></svg>
<div class="t" style="left:475px;top:181px">Underarm Front</div>
<div class="fx" style="left:485px;top:199px"></div><svg class="abs" style="left:485px;top:199px" width="18" height="16" viewBox="0 0 18 16"><path d="M12.2 4.2 Q10.5 2.6 9 3.6 Q8.4 4.2 8 6 L6.2 12.8" fill="none" stroke="#000" stroke-width="1.5"/><path d="M5.2 6.6 H10" stroke="#000" stroke-width="1.3"/><path d="M9.2 8.6 L13 12.4 M13.6 8.4 L9 12.6" stroke="#000" stroke-width="1.5"/></svg>
<div class="t" style="left:522px;top:198px">Measures:</div>
<div class="v" style="left:578px;top:199px">4.23</div>
<div class="v" style="left:633px;top:199px">4.35</div>
<div class="v" style="left:688px;top:199px">4.50</div>
<div class="sel" style="left:774px;top:200px">4.66</div>
<div class="v" style="left:798px;top:199px">4.82</div>
<div class="v" style="left:853px;top:199px">4.99</div>
<div class="v" style="left:908px;top:199px">5.19</div>
<div class="v" style="left:963px;top:199px">5.41</div>
<svg class="tri" style="left:460px;top:224px" width="14" height="9"><path d="M1.5 1.5 H11.5 L6.5 6.5 Z" fill="#d8d8d8" stroke="#000" stroke-width="1.2" stroke-linejoin="miter"/><path d="M11.8 2.5 L7.5 7" stroke="#aaa" stroke-width="1" fill="none"/></svg>
<div class="t" style="left:475px;top:217px">Armhole Front</div>
<div class="fx" style="left:485px;top:235px"></div><svg class="abs" style="left:485px;top:235px" width="18" height="16" viewBox="0 0 18 16"><path d="M12.2 4.2 Q10.5 2.6 9 3.6 Q8.4 4.2 8 6 L6.2 12.8" fill="none" stroke="#000" stroke-width="1.5"/><path d="M5.2 6.6 H10" stroke="#000" stroke-width="1.3"/><path d="M9.2 8.6 L13 12.4 M13.6 8.4 L9 12.6" stroke="#000" stroke-width="1.5"/></svg>
<div class="t" style="left:522px;top:234px">Measures:</div>
<div class="v" style="left:578px;top:235px">4.47</div>
<div class="v" style="left:633px;top:235px">4.65</div>
<div class="v" style="left:688px;top:235px">4.84</div>
<div class="v" style="left:743px;top:235px">5.03</div>
<div class="v" style="left:798px;top:235px">5.21</div>
<div class="v" style="left:853px;top:235px">5.40</div>
<div class="v" style="left:908px;top:235px">5.58</div>
<div class="v" style="left:963px;top:235px">5.77</div>
<svg class="tri" style="left:460px;top:260px" width="14" height="9"><path d="M1.5 1.5 H11.5 L6.5 6.5 Z" fill="#d8d8d8" stroke="#000" stroke-width="1.2" stroke-linejoin="miter"/><path d="M11.8 2.5 L7.5 7" stroke="#aaa" stroke-width="1" fill="none"/></svg>
<div class="t" style="left:475px;top:253px">Underarm Back</div>
<div class="fx" style="left:485px;top:271px"></div><svg class="abs" style="left:485px;top:271px" width="18" height="16" viewBox="0 0 18 16"><path d="M12.2 4.2 Q10.5 2.6 9 3.6 Q8.4 4.2 8 6 L6.2 12.8" fill="none" stroke="#000" stroke-width="1.5"/><path d="M5.2 6.6 H10" stroke="#000" stroke-width="1.3"/><path d="M9.2 8.6 L13 12.4 M13.6 8.4 L9 12.6" stroke="#000" stroke-width="1.5"/></svg>
<div class="t" style="left:522px;top:270px">Measures:</div>
<div class="v" style="left:578px;top:271px">4.23</div>
<div class="v" style="left:633px;top:271px">4.35</div>
<div class="v" style="left:688px;top:271px">4.50</div>
<div class="v" style="left:743px;top:271px">4.66</div>
<div class="v" style="left:798px;top:271px">4.82</div>
<div class="v" style="left:853px;top:271px">4.99</div>
<div class="v" style="left:908px;top:271px">5.19</div>
<div class="v" style="left:963px;top:271px">5.41</div>
<svg class="tri" style="left:460px;top:296px" width="14" height="9"><path d="M1.5 1.5 H11.5 L6.5 6.5 Z" fill="#d8d8d8" stroke="#000" stroke-width="1.2" stroke-linejoin="miter"/><path d="M11.8 2.5 L7.5 7" stroke="#aaa" stroke-width="1" fill="none"/></svg>
<div class="t" style="left:475px;top:289px">Armhole Back</div>
<div class="fx" style="left:485px;top:307px"></div><svg class="abs" style="left:485px;top:307px" width="18" height="16" viewBox="0 0 18 16"><path d="M12.2 4.2 Q10.5 2.6 9 3.6 Q8.4 4.2 8 6 L6.2 12.8" fill="none" stroke="#000" stroke-width="1.5"/><path d="M5.2 6.6 H10" stroke="#000" stroke-width="1.3"/><path d="M9.2 8.6 L13 12.4 M13.6 8.4 L9 12.6" stroke="#000" stroke-width="1.5"/></svg>
<div class="t" style="left:522px;top:306px">Measures:</div>
<div class="v" style="left:578px;top:307px">4.47</div>
<div class="v" style="left:633px;top:307px">4.66</div>
<div class="v" style="left:688px;top:307px">4.84</div>
<div class="v" style="left:743px;top:307px">5.03</div>
<div class="v" style="left:798px;top:307px">5.22</div>
<div class="v" style="left:853px;top:307px">5.40</div>
<div class="v" style="left:908px;top:307px">5.59</div>
<div class="v" style="left:963px;top:307px">5.78</div>
<svg class="tri" style="left:460px;top:332px" width="14" height="9"><path d="M1.5 1.5 H11.5 L6.5 6.5 Z" fill="#d8d8d8" stroke="#000" stroke-width="1.2" stroke-linejoin="miter"/><path d="M11.8 2.5 L7.5 7" stroke="#aaa" stroke-width="1" fill="none"/></svg>
<div class="t" style="left:475px;top:325px">Armhole Back Sleeve</div>
<div class="fx" style="left:485px;top:343px"></div><svg class="abs" style="left:485px;top:343px" width="18" height="16" viewBox="0 0 18 16"><path d="M12.2 4.2 Q10.5 2.6 9 3.6 Q8.4 4.2 8 6 L6.2 12.8" fill="none" stroke="#000" stroke-width="1.5"/><path d="M5.2 6.6 H10" stroke="#000" stroke-width="1.3"/><path d="M9.2 8.6 L13 12.4 M13.6 8.4 L9 12.6" stroke="#000" stroke-width="1.5"/></svg>
<div class="t" style="left:522px;top:342px">Measures:</div>
<div class="v g" style="left:578px;top:343px">4.47</div>
<div class="v g" style="left:633px;top:343px">4.66</div>
<div class="v g" style="left:688px;top:343px">4.84</div>
<div class="v g" style="left:743px;top:343px">5.03</div>
<div class="v g" style="left:798px;top:343px">5.22</div>
<div class="v g" style="left:853px;top:343px">5.40</div>
<div class="v g" style="left:908px;top:343px">5.59</div>
<div class="v g" style="left:963px;top:343px">5.78</div>
<svg class="tri" style="left:460px;top:368px" width="14" height="9"><path d="M1.5 1.5 H11.5 L6.5 6.5 Z" fill="#d8d8d8" stroke="#000" stroke-width="1.2" stroke-linejoin="miter"/><path d="M11.8 2.5 L7.5 7" stroke="#aaa" stroke-width="1" fill="none"/></svg>
<div class="t" style="left:475px;top:361px">Underarm Back Sleeve</div>
<div class="fx" style="left:485px;top:379px"></div><svg class="abs" style="left:485px;top:379px" width="18" height="16" viewBox="0 0 18 16"><path d="M12.2 4.2 Q10.5 2.6 9 3.6 Q8.4 4.2 8 6 L6.2 12.8" fill="none" stroke="#000" stroke-width="1.5"/><path d="M5.2 6.6 H10" stroke="#000" stroke-width="1.3"/><path d="M9.2 8.6 L13 12.4 M13.6 8.4 L9 12.6" stroke="#000" stroke-width="1.5"/></svg>
<div class="t" style="left:522px;top:378px">Measures:</div>
<div class="v g" style="left:578px;top:379px">4.23</div>
<div class="v g" style="left:633px;top:379px">4.35</div>
<div class="v g" style="left:688px;top:379px">4.50</div>
<div class="v g" style="left:743px;top:379px">4.66</div>
<div class="v g" style="left:798px;top:379px">4.82</div>
<div class="v g" style="left:853px;top:379px">4.99</div>
<div class="v g" style="left:908px;top:379px">5.19</div>
<div class="v g" style="left:963px;top:379px">5.41</div>
<svg class="tri" style="left:460px;top:404px" width="14" height="9"><path d="M1.5 1.5 H11.5 L6.5 6.5 Z" fill="#d8d8d8" stroke="#000" stroke-width="1.2" stroke-linejoin="miter"/><path d="M11.8 2.5 L7.5 7" stroke="#aaa" stroke-width="1" fill="none"/></svg>
<div class="t" style="left:475px;top:397px">Armhole Front Sleeve</div>
<div class="fx" style="left:485px;top:415px"></div><svg class="abs" style="left:485px;top:415px" width="18" height="16" viewBox="0 0 18 16"><path d="M12.2 4.2 Q10.5 2.6 9 3.6 Q8.4 4.2 8 6 L6.2 12.8" fill="none" stroke="#000" stroke-width="1.5"/><path d="M5.2 6.6 H10" stroke="#000" stroke-width="1.3"/><path d="M9.2 8.6 L13 12.4 M13.6 8.4 L9 12.6" stroke="#000" stroke-width="1.5"/></svg>
<div class="t" style="left:522px;top:414px">Measures:</div>
<div class="v g" style="left:578px;top:415px">4.47</div>
<div class="v g" style="left:633px;top:415px">4.65</div>
<div class="v g" style="left:688px;top:415px">4.84</div>
<div class="v g" style="left:743px;top:415px">5.03</div>
<div class="v g" style="left:798px;top:415px">5.21</div>
<div class="v g" style="left:853px;top:415px">5.40</div>
<div class="v g" style="left:908px;top:415px">5.58</div>
<div class="v g" style="left:963px;top:415px">5.77</div>
<svg class="tri" style="left:460px;top:440px" width="14" height="9"><path d="M1.5 1.5 H11.5 L6.5 6.5 Z" fill="#d8d8d8" stroke="#000" stroke-width="1.2" stroke-linejoin="miter"/><path d="M11.8 2.5 L7.5 7" stroke="#aaa" stroke-width="1" fill="none"/></svg>
<div class="t" style="left:475px;top:433px">Underarm Front Sleeve</div>
<div class="fx" style="left:485px;top:451px"></div><svg class="abs" style="left:485px;top:451px" width="18" height="16" viewBox="0 0 18 16"><path d="M12.2 4.2 Q10.5 2.6 9 3.6 Q8.4 4.2 8 6 L6.2 12.8" fill="none" stroke="#000" stroke-width="1.5"/><path d="M5.2 6.6 H10" stroke="#000" stroke-width="1.3"/><path d="M9.2 8.6 L13 12.4 M13.6 8.4 L9 12.6" stroke="#000" stroke-width="1.5"/></svg>
<div class="t" style="left:522px;top:450px">Measures:</div>
<div class="v g" style="left:578px;top:451px">4.23</div>
<div class="v g" style="left:633px;top:451px">4.35</div>
<div class="v g" style="left:688px;top:451px">4.50</div>
<div class="v g" style="left:743px;top:451px">4.66</div>
<div class="v g" style="left:798px;top:451px">4.82</div>
<div class="v g" style="left:853px;top:451px">4.99</div>
<div class="v g" style="left:908px;top:451px">5.19</div>
<div class="v g" style="left:963px;top:451px">5.41</div>
<svg class="tri" style="left:460px;top:476px" width="14" height="9"><path d="M1.5 1.5 H11.5 L6.5 6.5 Z" fill="#d8d8d8" stroke="#000" stroke-width="1.2" stroke-linejoin="miter"/><path d="M11.8 2.5 L7.5 7" stroke="#aaa" stroke-width="1" fill="none"/></svg>
<div class="t" style="left:475px;top:469px">Back Rib Neckline</div>
<div class="fx" style="left:485px;top:487px"></div><svg class="abs" style="left:485px;top:487px" width="18" height="16" viewBox="0 0 18 16"><path d="M12.2 4.2 Q10.5 2.6 9 3.6 Q8.4 4.2 8 6 L6.2 12.8" fill="none" stroke="#000" stroke-width="1.5"/><path d="M5.2 6.6 H10" stroke="#000" stroke-width="1.3"/><path d="M9.2 8.6 L13 12.4 M13.6 8.4 L9 12.6" stroke="#000" stroke-width="1.5"/></svg>
<div class="t" style="left:522px;top:486px">Measures:</div>
<div class="v" style="left:578px;top:487px">3.08</div>
<div class="v" style="left:633px;top:487px">3.26</div>
<div class="v" style="left:688px;top:487px">3.45</div>
<div class="v" style="left:743px;top:487px">3.64</div>
<div class="v" style="left:798px;top:487px">3.83</div>
<div class="v" style="left:853px;top:487px">4.02</div>
<div class="v" style="left:908px;top:487px">4.22</div>
<div class="v" style="left:963px;top:487px">4.41</div>
<svg class="tri" style="left:460px;top:512px" width="14" height="9"><path d="M1.5 1.5 H11.5 L6.5 6.5 Z" fill="#d8d8d8" stroke="#000" stroke-width="1.2" stroke-linejoin="miter"/><path d="M11.8 2.5 L7.5 7" stroke="#aaa" stroke-width="1" fill="none"/></svg>
<div class="t" style="left:475px;top:505px">Front Rib Neckline</div>
<div class="fx" style="left:485px;top:523px"></div><svg class="abs" style="left:485px;top:523px" width="18" height="16" viewBox="0 0 18 16"><path d="M12.2 4.2 Q10.5 2.6 9 3.6 Q8.4 4.2 8 6 L6.2 12.8" fill="none" stroke="#000" stroke-width="1.5"/><path d="M5.2 6.6 H10" stroke="#000" stroke-width="1.3"/><path d="M9.2 8.6 L13 12.4 M13.6 8.4 L9 12.6" stroke="#000" stroke-width="1.5"/></svg>
<div class="t" style="left:522px;top:522px">Measures:</div>
<div class="v" style="left:578px;top:523px">5.28</div>
<div class="v" style="left:633px;top:523px">5.48</div>
<div class="v" style="left:688px;top:523px">5.69</div>
<div class="v" style="left:743px;top:523px">5.89</div>
<div class="v" style="left:798px;top:523px">6.09</div>
<div class="v" style="left:853px;top:523px">6.29</div>
<div class="v" style="left:908px;top:523px">6.50</div>
<div class="v" style="left:963px;top:523px">6.70</div>
<svg class="tri" style="left:460px;top:548px" width="14" height="9"><path d="M1.5 1.5 H11.5 L6.5 6.5 Z" fill="#d8d8d8" stroke="#000" stroke-width="1.2" stroke-linejoin="miter"/><path d="M11.8 2.5 L7.5 7" stroke="#aaa" stroke-width="1" fill="none"/></svg>
<div class="t" style="left:475px;top:541px">Back Rib Collar</div>
<div class="fx" style="left:485px;top:559px"></div><svg class="abs" style="left:485px;top:559px" width="18" height="16" viewBox="0 0 18 16"><path d="M12.2 4.2 Q10.5 2.6 9 3.6 Q8.4 4.2 8 6 L6.2 12.8" fill="none" stroke="#000" stroke-width="1.5"/><path d="M5.2 6.6 H10" stroke="#000" stroke-width="1.3"/><path d="M9.2 8.6 L13 12.4 M13.6 8.4 L9 12.6" stroke="#000" stroke-width="1.5"/></svg>
<div class="t" style="left:522px;top:558px">Measures:</div>
<div class="v g" style="left:578px;top:559px">3.08</div>
<div class="v g" style="left:633px;top:559px">3.26</div>
<div class="v g" style="left:688px;top:559px">3.45</div>
<div class="v g" style="left:743px;top:559px">3.64</div>
<div class="v g" style="left:798px;top:559px">3.83</div>
<div class="v g" style="left:853px;top:559px">4.02</div>
<div class="v g" style="left:908px;top:559px">4.22</div>
<div class="v g" style="left:963px;top:559px">4.41</div>
<svg class="tri" style="left:460px;top:584px" width="14" height="9"><path d="M1.5 1.5 H11.5 L6.5 6.5 Z" fill="#d8d8d8" stroke="#000" stroke-width="1.2" stroke-linejoin="miter"/><path d="M11.8 2.5 L7.5 7" stroke="#aaa" stroke-width="1" fill="none"/></svg>
<div class="t" style="left:475px;top:577px">Front Rib Collar</div>
<div class="fx" style="left:485px;top:595px"></div><svg class="abs" style="left:485px;top:595px" width="18" height="16" viewBox="0 0 18 16"><path d="M12.2 4.2 Q10.5 2.6 9 3.6 Q8.4 4.2 8 6 L6.2 12.8" fill="none" stroke="#000" stroke-width="1.5"/><path d="M5.2 6.6 H10" stroke="#000" stroke-width="1.3"/><path d="M9.2 8.6 L13 12.4 M13.6 8.4 L9 12.6" stroke="#000" stroke-width="1.5"/></svg>
<div class="t" style="left:522px;top:594px">Measures:</div>
<div class="v g" style="left:578px;top:595px">5.28</div>
<div class="v g" style="left:633px;top:595px">5.48</div>
<div class="v g" style="left:688px;top:595px">5.69</div>
<div class="v g" style="left:743px;top:595px">5.89</div>
<div class="v g" style="left:798px;top:595px">6.09</div>
<div class="v g" style="left:853px;top:595px">6.29</div>
<div class="v g" style="left:908px;top:595px">6.50</div>
<div class="v g" style="left:963px;top:595px">6.70</div>
<div style="position:absolute;left:449px;top:616px;width:9px;height:1px;background:#000"></div>
</body></html>
